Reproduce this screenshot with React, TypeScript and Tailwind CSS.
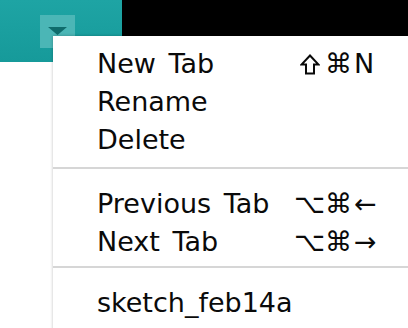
import React from "react";

type Item = { label: string; mods?: React.ReactNode; key?: string };

const ShiftGlyph = () => (
  <svg width="20" height="21" viewBox="0 0 20 21" className="mr-[5px]">
    <polygon
      points="10,1.5 18.5,10.5 14,10.5 14,19.5 6,19.5 6,10.5 1.5,10.5"
      fill="none"
      stroke="#0a0a0a"
      strokeWidth="2"
      strokeLinejoin="miter"
    />
  </svg>
);

const groups: Item[][] = [
  [
    { label: "New Tab", mods: <><ShiftGlyph />⌘</>, key: "N" },
    { label: "Rename" },
    { label: "Delete" },
  ],
  [
    { label: "Previous Tab", mods: "⌥⌘", key: "←" },
    { label: "Next Tab", mods: "⌥⌘", key: "→" },
  ],
  [{ label: "sketch_feb14a" }],
];

export default function App() {
  return (
    <div
      className="relative w-[408px] h-[328px] overflow-hidden bg-white"
      style={{ fontFamily: '"DejaVu Sans", "Liberation Sans", sans-serif' }}
    >
      {/* header strip */}
      <div className="flex h-[62px]">
        <div className="w-[122px] bg-gradient-to-b from-[#1ea4a4] to-[#169a9a] pl-[40px] pt-[15px]">
          <div className="w-[35px] h-[33px] bg-[#4bb6b6] flex justify-center pt-[12px]">
            <svg width="19" height="8" viewBox="0 0 19 8">
              <polygon points="0,0 19,0 9.5,8" fill="#0f6c6c" />
            </svg>
          </div>
        </div>
        <div className="flex-1 bg-black" />
      </div>

      {/* tab menu */}
      <div className="absolute left-[53px] top-[36px] w-[367px] h-[310px] bg-white shadow-[0_0_3px_rgba(0,0,0,0.25)] pl-[44px] pr-[43px] pt-[9px] text-[27px] text-[#0a0a0a] leading-[38px]">
        {groups.map((group, gi) => (
          <div key={gi}>
            {gi > 0 && (
              <div className={`h-[2px] bg-[#d6d6d6] -ml-[44px] -mr-[43px] ${gi === 1 ? "mt-[8px] mb-[16px]" : "mt-[5px] mb-[16px]"}`} />
            )}
            {group.map((item) => (
              <div key={item.label} className="flex items-center justify-between h-[38px]">
                <span className="[word-spacing:4px]">{item.label}</span>
                {item.key && (
                  <span className="flex items-center">
                    <span className="flex items-center">{item.mods}</span>
                    <span className="w-[25px] pl-[2px] text-left">{item.key}</span>
                  </span>
                )}
              </div>
            ))}
          </div>
        ))}
      </div>
    </div>
  );
}
